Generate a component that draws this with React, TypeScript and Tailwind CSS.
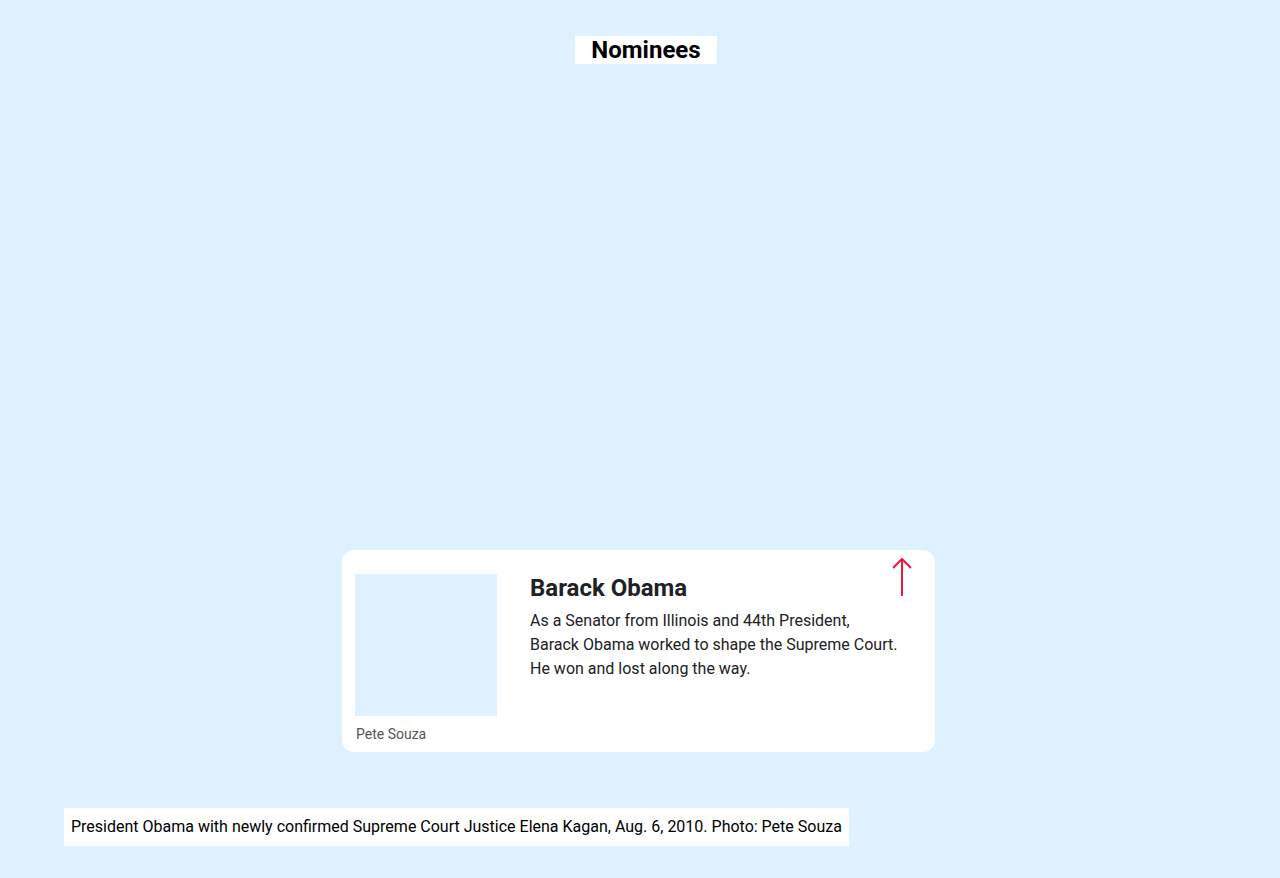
const UpArrow = () => (
    <svg width="24" height="40" viewBox="0 0 24 40" fill="none" className="absolute left-[548px] top-[7px]">
        <path d="M12 2 V39 M3 11 L12 2 L21 11" stroke="#e8183f" strokeWidth="2" />
    </svg>
);

const NomineeCard = () => {
    return (
        <div className="relative flex w-[593px] items-start rounded-xl bg-white px-[13px]">
            <div className="flex flex-col pt-[24px] pb-[9px]">
                <div className="h-[142px] w-[142px] bg-[#dff0fe]"></div>
                <span className="mt-[9px] pl-px text-[14px] leading-[18px] text-[#555]">Pete Souza</span>
            </div>
            <div className="ml-[33px] flex flex-col pt-[22px]">
                <h3 className="text-[24px] leading-[32px] font-bold text-[#202124]">Barack Obama</h3>
                <p className="mt-[5px] w-[372px] text-[16px] leading-[24px] text-[#202124]">
                    As a Senator from Illinois and 44th President, Barack Obama worked to shape the Supreme Court. He won and lost along the way.
                </p>
            </div>
            <UpArrow />
        </div>
    );
};

export default function App() {
    return (
        <div className="min-h-[878px] bg-[#dff0fe] pt-[36px] font-['Roboto',sans-serif]">
            <div className="flex justify-center pl-[12px]">
                <h2 className="bg-white px-[16px] text-[24px] leading-[28px] font-bold text-black">Nominees</h2>
            </div>

            <div className="mt-[486px] flex justify-center pr-[3px]">
                <NomineeCard />
            </div>

            <div className="mt-[56px] pl-[64px]">
                <p className="w-fit bg-white px-[7px] py-[7px] text-[16px] leading-[24px] text-black">
                    President Obama with newly confirmed Supreme Court Justice Elena Kagan, Aug. 6, 2010. Photo: Pete Souza
                </p>
            </div>
        </div>
    );
}
